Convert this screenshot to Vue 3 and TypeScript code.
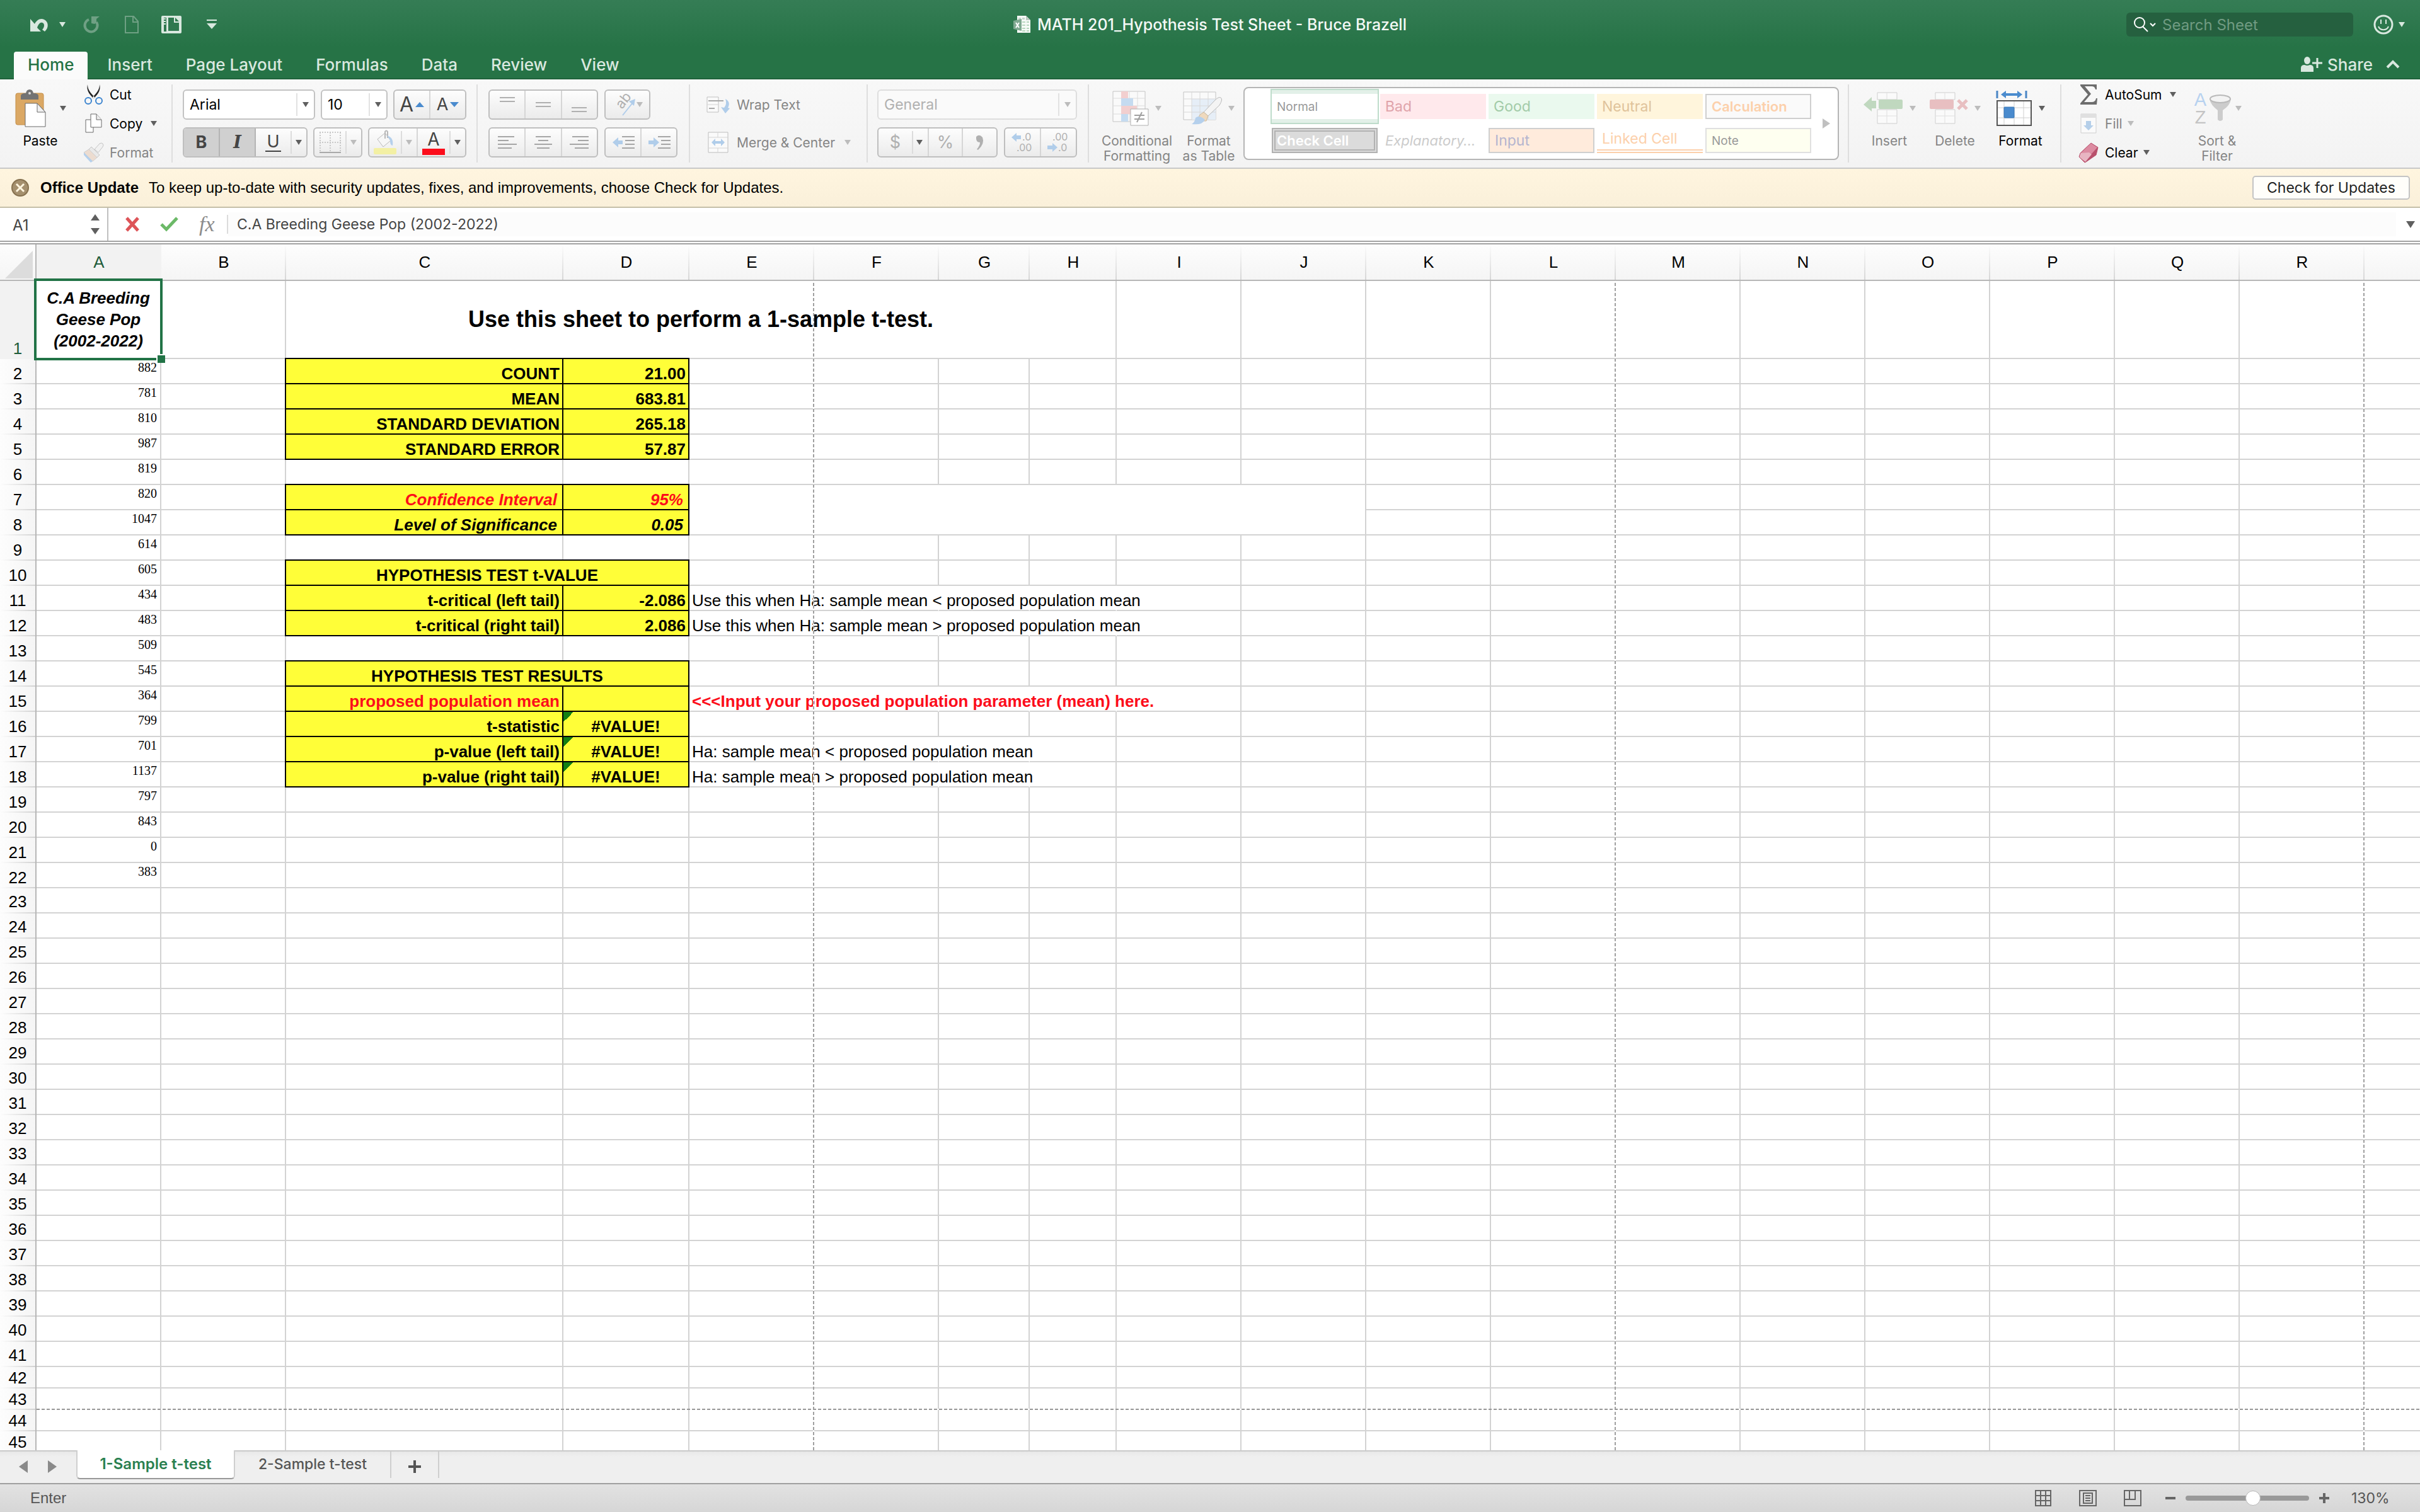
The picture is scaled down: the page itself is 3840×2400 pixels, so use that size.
<script setup lang="ts">
import { ref } from 'vue'

interface Column { letter: string; width?: number; pageBreak?: boolean }
interface Cell { key: string; text: string; classes: string[]; colspan: number; rowspan: number }
interface Row { number: number; classes: string[]; cells: Cell[] }

const menuTabs: string[] = ['Home', 'Insert', 'Page Layout', 'Formulas', 'Data', 'Review', 'View']

const columns: Column[] = [
  { letter: 'A', width: 198 },
  { letter: 'B', width: 198 },
  { letter: 'C', width: 440 },
  { letter: 'D', width: 200 },
  { letter: 'E', width: 198, pageBreak: true },
  { letter: 'F', width: 198 },
  { letter: 'G', width: 144 },
  { letter: 'H', width: 138 },
  { letter: 'I', width: 198 },
  { letter: 'J', width: 198 },
  { letter: 'K', width: 198 },
  { letter: 'L', width: 198, pageBreak: true },
  { letter: 'M', width: 198 },
  { letter: 'N', width: 198 },
  { letter: 'O', width: 198 },
  { letter: 'P', width: 198 },
  { letter: 'Q', width: 198 },
  { letter: 'R', width: 198, pageBreak: true },
  { letter: '' },
]

const geese: number[] = [882, 781, 810, 987, 819, 820, 1047, 614, 605, 434, 483, 509, 545, 364, 799, 701, 1137, 797, 843, 0, 383]

// [text, classes, colspan, rowspan]
const content: Record<string, [string, string, number?, number?]> = {
  A1: ['C.A Breeding Geese Pop (2002-2022)', 'active'],
  C1: ['Use this sheet to perform a 1-sample t-test.', 'heading', 6],
  C2: ['COUNT', 'box'], D2: ['21.00', 'box'],
  C3: ['MEAN', 'box'], D3: ['683.81', 'box'],
  C4: ['STANDARD DEVIATION', 'box'], D4: ['265.18', 'box'],
  C5: ['STANDARD ERROR', 'box'], D5: ['57.87', 'box'],
  C7: ['Confidence Interval', 'box slanted red'], D7: ['95%', 'box slanted red'],
  C8: ['Level of Significance', 'box slanted'], D8: ['0.05', 'box slanted'],
  E7: ['', '', 6, 2],
  C10: ['HYPOTHESIS TEST t-VALUE', 'box middle', 2],
  C11: ['t-critical (left tail)', 'box'], D11: ['-2.086', 'box'],
  C12: ['t-critical (right tail)', 'box'], D12: ['2.086', 'box'],
  C14: ['HYPOTHESIS TEST RESULTS', 'box middle', 2],
  C15: ['proposed population mean', 'box red'], D15: ['', 'box'],
  C16: ['t-statistic', 'box'], D16: ['#VALUE!', 'box middle flagged'],
  C17: ['p-value (left tail)', 'box'], D17: ['#VALUE!', 'box middle flagged'],
  C18: ['p-value (right tail)', 'box'], D18: ['#VALUE!', 'box middle flagged'],
  E11: ['Use this when Ha: sample mean < proposed population mean', ''],
  E12: ['Use this when Ha: sample mean > proposed population mean', ''],
  E15: ['<<<Input your proposed population parameter (mean) here.', 'bold red'],
  E17: ['Ha: sample mean < proposed population mean', ''],
  E18: ['Ha: sample mean > proposed population mean', ''],
}

// Text that runs past its own cell hides the grid lines that it crosses.
const spills: Record<number, string> = { 11: 'EFGH', 12: 'EFGH', 15: 'EFGH', 17: 'EFG', 18: 'EFG' }

function rowClasses(number: number): string[] {
  if (number === 1) return ['tall']
  if (number === 43) return ['short', 'page-break']
  if (number > 41) return ['short']
  return number > 22 ? ['raised'] : []
}

function buildRow(number: number): Row {
  const cells: Cell[] = []
  let skip = 0
  for (const column of columns) {
    if (skip > 0) { skip--; continue }
    if (number === 8 && column.letter && 'EFGHIJ'.includes(column.letter)) continue
    const key = `${column.letter}${number}`
    const entry = content[key]
    const classes = entry ? entry[1].split(' ').filter(Boolean) : []
    let text = entry ? entry[0] : ''
    if (column.letter === 'A' && number > 1 && number <= geese.length + 1) {
      text = String(geese[number - 2])
      classes.push('count')
    }
    if (column.letter && spills[number]?.includes(column.letter)) classes.push('open')
    const colspan = entry?.[2] ?? 1
    cells.push({ key, text, classes, colspan, rowspan: entry?.[3] ?? 1 })
    skip = colspan - 1
  }
  return { number, classes: rowClasses(number), cells }
}

const rows: Row[] = Array.from({ length: 45 }, (_, i) => buildRow(i + 1))

const styleNames: { name: string; kind: string }[] = [
  { name: 'Normal', kind: 'normal' },
  { name: 'Bad', kind: 'bad' },
  { name: 'Good', kind: 'good' },
  { name: 'Neutral', kind: 'neutral' },
  { name: 'Calculation', kind: 'calculation' },
  { name: 'Check Cell', kind: 'checked' },
  { name: 'Explanatory...', kind: 'explanatory' },
  { name: 'Input', kind: 'input' },
  { name: 'Linked Cell', kind: 'linked' },
  { name: 'Note', kind: 'note' },
]

const fontName = ref('Arial')
const fontSize = ref('10')
const numberFormat = ref('General')
const cellName = ref('A1')
const formula = ref('C.A Breeding Geese Pop (2002-2022)')
const search = ref('')
const zoom = ref(55)
</script>

<template>
  <div class="window">
    <header class="top">
      <div class="titlebar">
        <div class="quick">
          <button class="plain undo" aria-label="Undo">
            <svg width="32" height="24" viewBox="0 0 32 24"><path d="M2 3v20h17l-6-6c2-6 5-9 8-8 4 1 4 7 0 11l4 3c7-6 6-16-1-19-6-3-12 1-15 7z" fill="#d9e8df" /></svg>
          </button>
          <button class="plain" aria-label="Undo history"><span class="tri pale"></span></button>
          <button class="plain redo" aria-label="Redo">
            <svg width="26" height="28" viewBox="0 0 26 28"><path d="M8 6a10 10 0 1 0 12 4" fill="none" stroke="#6fa084" stroke-width="4" /><path d="M12 1h13l-5 4v6l-3 2-5-1z" fill="#6fa084" /></svg>
          </button>
          <button class="plain blank" aria-label="New document">
            <svg width="24" height="30" viewBox="0 0 24 30"><path d="M2 2h13l7 8v18H2z M14 2v9h8" fill="none" stroke="#6fa084" stroke-width="2" /></svg>
          </button>
          <button class="plain layout" aria-label="Layout">
            <svg width="34" height="30" viewBox="0 0 34 30"><rect x="1" y="1" width="32" height="28" rx="2" fill="#d9e8df" /><path d="M12 4h9v8h8v13H12z" fill="#2f784f" /><path d="M23 4l6 6h-6z" fill="#2f784f" /><path d="M5 4h4v22H5z" fill="#2f784f" /><path d="M5 6h3M5 10h3M5 14h3" stroke="#d9e8df" stroke-width="2" /></svg>
          </button>
          <button class="plain" aria-label="Customize toolbar">
            <svg width="18" height="18" viewBox="0 0 18 18"><path d="M1 2h16" stroke="#d9e8df" stroke-width="2" /><path d="M1 7h16l-8 9z" fill="#d9e8df" /></svg>
          </button>
        </div>
        <h1 class="title">
          <svg width="28" height="30" viewBox="0 0 28 30"><path d="M6 1h14l7 7v20H6z" fill="#f6faf7" /><path d="M20 1v7h7z" fill="#bcc9c1" /><path d="M8 4h4v3H8zM14 4h4v3h-4z" fill="#c9d6ce" /><path d="M14 10h5v2h-5zM21 10h4v2h-4zM14 15h5v2h-5zM21 15h4v2h-4zM14 20h5v2h-5zM21 20h4v2h-4zM14 24h5v2h-5zM21 24h4v2h-4z" fill="#b9d8c0" /><path d="M0 9l13-3v19L0 22z" fill="#7fa890" /><path d="M4 12l5 8M9 12l-5 8" stroke="#fff" stroke-width="2" /></svg>
          <span>MATH 201_Hypothesis Test Sheet - Bruce Brazell</span>
        </h1>
        <div class="corner">
          <label class="search">
            <svg width="38" height="26" viewBox="0 0 38 26"><circle cx="10" cy="10" r="8" fill="none" stroke="#fff" stroke-width="2" /><path d="M15 16l8 8" stroke="#fff" stroke-width="2" /><path d="M27 11l4 4 4-4" fill="none" stroke="#fff" stroke-width="2" /></svg>
            <input v-model="search" type="text" placeholder="Search Sheet" aria-label="Search Sheet">
          </label>
          <button class="plain smile" aria-label="Feedback">
            <svg width="34" height="34" viewBox="0 0 34 34"><circle cx="17" cy="17" r="14" fill="none" stroke="#d9e8df" stroke-width="3" /><path d="M13 9v7M21 9v7" stroke="#d9e8df" stroke-width="2" /><path d="M9 20c3 7 13 7 16 0" fill="none" stroke="#d9e8df" stroke-width="2" /></svg>
            <span class="tri pale"></span>
          </button>
        </div>
      </div>
      <nav class="tabs">
        <button v-for="(tab, i) in menuTabs" :key="tab" class="tab" :class="{ current: i === 0 }">{{ tab }}</button>
        <button class="plain share">
          <svg width="36" height="26" viewBox="0 0 36 26"><ellipse cx="11" cy="7" rx="5" ry="6" fill="#d9e8df" /><path d="M1 25v-6q0-5 6-5 4 2 8 0 6 0 6 5v6z" fill="#d9e8df" /><path d="M19 11h16M27 3v16" stroke="#d9e8df" stroke-width="3" /></svg>
          Share
        </button>
        <button class="plain collapse" aria-label="Collapse ribbon">
          <svg width="22" height="14" viewBox="0 0 22 14"><path d="M2 12l9-9 9 9" fill="none" stroke="#d9e8df" stroke-width="4" /></svg>
        </button>
      </nav>
    </header>

    <section class="ribbon" aria-label="Home">
      <div class="group clipboard">
        <button class="big paste">
          <span class="art">
            <svg width="54" height="62" viewBox="0 0 54 62"><rect x="2" y="7" width="44" height="50" rx="3" fill="#dba864" stroke="#c48f4b" /><path d="M10 17v-6q0-3 5-4h3q1-6 6-6t6 6h3q5 1 5 4v6z" fill="#737373" /><circle cx="24" cy="7" r="2" fill="#ddd" /><path d="M17 23h19l13 14v23H17z" fill="#fff" stroke="#6b6b6b" /><path d="M36 23v14h13z" fill="#f0f0f0" stroke="#6b6b6b" /></svg>
            <span class="tri"></span>
          </span>
          <span class="caption">Paste</span>
        </button>
        <div class="stack">
          <button class="small far">
            <svg width="32" height="34" viewBox="0 0 32 34"><path d="M7 1c0 8 4 13 12 21l-3 1C8 15 5 9 7 1zM26 1c0 8-4 13-12 21l3 1C25 15 28 9 26 1z" fill="#222" /><circle cx="8" cy="27" r="5" fill="none" stroke="#3d85cf" stroke-width="2" /><circle cx="25" cy="27" r="5" fill="none" stroke="#3d85cf" stroke-width="2" /></svg>
            Cut
          </button>
          <button class="small far">
            <svg width="32" height="34" viewBox="0 0 32 34"><path d="M4 11h12v20H4z" fill="#fff" stroke="#6b6b6b" /><path d="M12 2h9l8 9v12H12z" fill="#fff" stroke="#6b6b6b" /><path d="M21 2v9h8" fill="#eee" stroke="#6b6b6b" /></svg>
            Copy <span class="tri"></span>
          </button>
          <button class="small far" disabled>
            <svg width="32" height="34" viewBox="0 0 32 34"><path d="M18 12l8-9q3-2 5 0 2 2 0 5l-7 9z" fill="#f1f1f1" stroke="#c4c4c4" /><path d="M13 8l13 13-4 4L9 12z" fill="#e9e9e9" stroke="#c4c4c4" /><path d="M9 12l13 13-7 6L1 17z" fill="#ecdcd0" stroke="#cfcfcf" /><path d="M1 17l14 14-3 2L1 21z" fill="#b5d0ec" /></svg>
            Format
          </button>
        </div>
      </div>
      <span class="sep"></span>

      <div class="group rows font">
        <div class="line">
          <span class="combo family">
            <select v-model="fontName" aria-label="Font"><option>Arial</option></select>
            <span class="tri"></span>
          </span>
          <span class="combo size">
            <select v-model="fontSize" aria-label="Font size"><option>10</option></select>
            <span class="tri"></span>
          </span>
          <div class="cluster step">
            <button aria-label="Increase font size"><span class="glyph large">A</span><span class="tri up blue"></span></button>
            <button aria-label="Decrease font size"><span class="glyph">A</span><span class="tri blue"></span></button>
          </div>
        </div>
        <div class="line">
          <div class="cluster biu">
            <button class="pressed"><b class="glyph">B</b></button>
            <button class="pressed"><i class="glyph serif">I</i></button>
            <button class="split"><span class="glyph underlined">U</span></button>
            <button class="drop" aria-label="Underline styles"><span class="tri"></span></button>
          </div>
          <div class="cluster borders">
            <button class="split" aria-label="Borders" disabled>
              <svg width="36" height="36" viewBox="0 0 36 36"><path d="M1 2h34M1 18h34M2 2v30M18 2v30M34 2v30" fill="none" stroke="#c9c9c9" stroke-width="2" stroke-dasharray="2 2" /><path d="M1 34h34" stroke="#a9a9a9" stroke-width="2" /></svg>
            </button>
            <button class="drop" aria-label="Border styles" disabled><span class="tri"></span></button>
          </div>
          <div class="cluster paint">
            <button class="split" aria-label="Fill color" disabled>
              <svg width="38" height="40" viewBox="0 0 38 40"><path d="M7 15l12-10 9 12-12 10z" fill="#f7f7f7" stroke="#b9b9b9" /><path d="M19 14V3q2-3 4 0v10" fill="none" stroke="#b9b9b9" stroke-width="2" /><path d="M22 9q11 3 9 16-4 0-4-8z" fill="#b5d0ec" /><rect x="1" y="29" width="36" height="10" rx="2" fill="#f3f0a4" /></svg>
            </button>
            <button class="drop" aria-label="Fill colors" disabled><span class="tri"></span></button>
            <button class="split ruled" aria-label="Font color"><span class="inked">A</span></button>
            <button class="drop" aria-label="Font colors"><span class="tri"></span></button>
          </div>
        </div>
      </div>
      <span class="sep"></span>

      <div class="group rows align">
        <div class="line">
          <div class="cluster three">
            <button aria-label="Align top" disabled><svg width="34" height="30" viewBox="0 0 34 30"><path d="M5 4h24M5 10h24" stroke="#b0b0b0" stroke-width="2" /></svg></button>
            <button aria-label="Align middle" disabled><svg width="34" height="30" viewBox="0 0 34 30"><path d="M5 12h24M5 18h24" stroke="#b0b0b0" stroke-width="2" /></svg></button>
            <button aria-label="Align bottom" disabled><svg width="34" height="30" viewBox="0 0 34 30"><path d="M5 20h24M5 26h24" stroke="#b0b0b0" stroke-width="2" /></svg></button>
          </div>
          <div class="cluster orient">
            <button aria-label="Orientation" disabled>
              <svg width="38" height="38" viewBox="0 0 38 38"><text x="0" y="0" transform="translate(15 27) rotate(-52)" font-size="22">ab</text><path d="M16 36l16-20" stroke="#b0cdea" stroke-width="2" /><path d="M36 10l-10 4 8 7z" fill="#b0cdea" /></svg>
              <span class="tri"></span>
            </button>
          </div>
        </div>
        <div class="line">
          <div class="cluster three">
            <button aria-label="Align left" disabled><svg width="34" height="26" viewBox="0 0 34 26"><path d="M2 4h26M2 10h17M2 16h30M2 22h22" stroke="#a6a6a6" stroke-width="2" /></svg></button>
            <button aria-label="Align center" disabled><svg width="34" height="26" viewBox="0 0 34 26"><path d="M5 4h24M9 10h16M3 16h28M7 22h20" stroke="#a6a6a6" stroke-width="2" /></svg></button>
            <button aria-label="Align right" disabled><svg width="34" height="26" viewBox="0 0 34 26"><path d="M6 4h26M15 10h17M2 16h30M10 22h22" stroke="#a6a6a6" stroke-width="2" /></svg></button>
          </div>
          <div class="cluster indent">
            <button aria-label="Decrease indent" disabled><svg width="36" height="26" viewBox="0 0 36 26"><path d="M16 4h20M21 10h15M21 16h15M16 22h20" stroke="#a6a6a6" stroke-width="2" /><path d="M1 13l9-8v5h7v6h-7v5z" fill="#b0cdea" /></svg></button>
            <button aria-label="Increase indent" disabled><svg width="36" height="26" viewBox="0 0 36 26"><path d="M16 4h20M21 10h15M21 16h15M16 22h20" stroke="#a6a6a6" stroke-width="2" /><path d="M18 13L9 5v5H1v6h8v5z" fill="#b0cdea" /></svg></button>
          </div>
        </div>
      </div>
      <span class="sep"></span>

      <div class="group rows wrap">
        <button class="small" disabled>
          <svg width="40" height="32" viewBox="0 0 40 32"><path d="M1 4h18v24H1z" fill="#fafafa" stroke="#c0c0c0" /><path d="M3 10h24" stroke="#a9a9a9" stroke-width="2" /><path d="M1 16h18" stroke="#d4d4d4" /><path d="M4 22h9" stroke="#a9a9a9" stroke-width="2" /><path d="M30 7q9 5 4 14l3 1-7 8-7-10 5 1q5-6 2-14z" fill="#b0cdea" /></svg>
          Wrap Text
        </button>
        <button class="small" disabled>
          <svg width="40" height="34" viewBox="0 0 40 34"><path d="M3 1h31v32H3z" fill="#fafafa" stroke="#bdbdbd" /><path d="M3 9h31M3 26h31M18 1v8M18 26v7" stroke="#d4d4d4" /><path d="M8 17l6-6v4h9v-4l6 6-6 6v-4h-9v4z" fill="#b0cdea" /></svg>
          Merge &amp; Center <span class="tri"></span>
        </button>
      </div>
      <span class="sep"></span>

      <div class="group rows number">
        <span class="combo faded">
          <select v-model="numberFormat" aria-label="Number format" disabled><option>General</option></select>
          <span class="tri"></span>
        </span>
        <div class="line">
          <div class="cluster money">
            <button class="split" disabled><span class="glyph">$</span></button>
            <button class="drop" aria-label="Currencies"><span class="tri"></span></button>
            <button class="ruled" disabled><span class="glyph">%</span></button>
            <button aria-label="Comma style" disabled><svg width="16" height="26" viewBox="0 0 16 26"><path d="M2 4q5-5 10 1 4 10-7 20l-2-1q5-6 5-11-7 0-6-9z" fill="#b0b0b0" /></svg></button>
          </div>
          <div class="cluster decimals">
            <button aria-label="Increase decimal" disabled><svg width="38" height="36" viewBox="0 0 38 36"><path d="M1 10l8-7v4h7v6H9v4z" fill="#b0cdea" /><text x="18" y="15" font-size="16">.0</text><text x="9" y="32" font-size="16">.00</text></svg></button>
            <button aria-label="Decrease decimal" disabled><svg width="38" height="36" viewBox="0 0 38 36"><text x="9" y="15" font-size="16">.00</text><path d="M17 26l-8-7v4H1v6h8v4z" fill="#b0cdea" /><text x="18" y="32" font-size="16">.0</text></svg></button>
          </div>
        </div>
      </div>
      <span class="sep"></span>

      <div class="group styles">
        <button class="big conditional" disabled>
          <span class="art">
            <svg width="58" height="56" viewBox="0 0 58 56"><path d="M1 1h51v48H1z" fill="#fafafa" stroke="#c4c4c4" /><path d="M1 12h51M1 24h51M1 37h51M27 1v48M40 1v48" stroke="#dcdcdc" /><path d="M14 1h11v11H14zM14 24h25v13H14z" fill="#f2cfcf" /><path d="M14 12h19v12H14zM14 37h11v12H14z" fill="#c5dbf0" /><path d="M29 29h28v26H29z" fill="#fff" stroke="#b0b0b0" /><path d="M35 39h16M35 45h16M47 34l-8 16" stroke="#a0a0a0" stroke-width="2" /></svg>
            <span class="tri"></span>
          </span>
          <span class="caption">Conditional Formatting</span>
        </button>
        <button class="big astable" disabled>
          <span class="art">
            <svg width="62" height="56" viewBox="0 0 62 56"><path d="M1 2h51v44H1z" fill="#fafafa" stroke="#c4c4c4" /><path d="M14 13h38v33H14z" fill="#e6eef7" /><path d="M1 13h51M1 24h51M1 34h51M14 2v44M27 2v44M40 2v44" stroke="#d8d8d8" /><path d="M60 11q4 2-2 12L40 40l-7-6 18-19q6-6 9-4z" fill="#f4f4f4" stroke="#b9b9b9" /><path d="M33 34l7 6-3 8H22q2-4 5-10z" fill="#efd9bd" stroke="#cdbb9f" /><path d="M20 43q6-5 15 3-4 9-21 7 5-3 6-10z" fill="#b5d0ec" /></svg>
            <span class="tri"></span>
          </span>
          <span class="caption">Format<br>as Table</span>
        </button>
        <div class="gallery">
          <div class="swatches">
            <button v-for="s in styleNames" :key="s.kind" class="swatch" :class="s.kind" disabled>{{ s.name }}</button>
          </div>
          <button class="plain" aria-label="More styles"><span class="tri right"></span></button>
        </div>
      </div>
      <span class="sep"></span>

      <div class="group cells">
        <button class="big" disabled>
          <span class="art">
            <svg width="64" height="52" viewBox="0 0 64 52"><path d="M23 1h31v11H23zM23 28h31v22H23z" fill="#fafafa" stroke="#cfcfcf" /><path d="M38 1v11M38 28v22M23 38h31" stroke="#e0e0e0" /><rect x="25" y="12" width="38" height="15" rx="2" fill="#c0d8bf" /><path d="M1 20L14 8v6h7v12h-7v5z" fill="#c0d8bf" /></svg>
            <span class="tri"></span>
          </span>
          <span class="caption">Insert</span>
        </button>
        <button class="big" disabled>
          <span class="art">
            <svg width="62" height="52" viewBox="0 0 62 52"><path d="M10 1h31v11H10zM10 28h31v22H10z" fill="#fafafa" stroke="#cfcfcf" /><path d="M25 1v11M25 28v22M10 38h31" stroke="#e0e0e0" /><rect x="1" y="12" width="38" height="15" rx="2" fill="#e8bfc1" /><path d="M46 13l14 14M60 13L46 27" stroke="#e8bfc1" stroke-width="5" /></svg>
            <span class="tri"></span>
          </span>
          <span class="caption">Delete</span>
        </button>
        <button class="big">
          <span class="art">
            <svg width="58" height="58" viewBox="0 0 58 58"><path d="M2 1v12M48 1v12" stroke="#4a86c5" stroke-width="3" /><path d="M8 7l8-6v4h18V1l8 6-8 6V9H16v4z" fill="#4a8bce" /><path d="M2 17h54v39H2z" fill="#fff" stroke="#555" stroke-width="2" /><path d="M3 28h52M3 44h52M13 18v37M29 18v37M44 18v37" stroke="#cfcfcf" /><rect x="13" y="27" width="16" height="17" rx="1" fill="#4a8bce" stroke="#3474b5" /></svg>
            <span class="tri"></span>
          </span>
          <span class="caption">Format</span>
        </button>
      </div>
      <span class="sep"></span>

      <div class="group editing">
        <div class="stack">
          <button class="small far">
            <svg width="32" height="34" viewBox="0 0 32 34"><path d="M3 1h26v8h-2q-1-5-6-5H10l10 12-11 13h12q6 0 7-6h2l-1 10H3v-2l12-14L3 3z" fill="#6d6d6d" /></svg>
            AutoSum <span class="tri"></span>
          </button>
          <button class="small" disabled>
            <svg width="32" height="34" viewBox="0 0 32 34"><path d="M4 2h24v30H4z" fill="#fafafa" stroke="#cfcfcf" /><path d="M4 2h24v6H4z" fill="#e0e0e0" /><path d="M16 28l-8-8h4v-7h8v7h4z" fill="#b5cfe9" /></svg>
            Fill <span class="tri"></span>
          </button>
          <button class="small">
            <svg width="32" height="34" viewBox="0 0 32 34"><path d="M20 2l11 7-3 12-16 11-2 1L1 24l2-6z" fill="#b9506c" /><path d="M20 2l10 7-9 10L3 18z" fill="#dc8ba1" /><path d="M3 18l14-1 4 3-10 12L1 24z" fill="#e8b5c2" /><path d="M20 2l11 7-3 12-16 11-2 1L1 24l2-6z" fill="none" stroke="#b9506c" /></svg>
            Clear <span class="tri"></span>
          </button>
        </div>
        <button class="big sort" disabled>
          <span class="art">
            <span class="sort-icon">
              <span class="letters"><span class="az-a">A</span><span class="az-z">Z</span></span>
              <svg width="36" height="46" viewBox="0 0 36 46"><path d="M1 8q2 10 13 18v15q4 4 8 0V26q12-8 13-18z" fill="#cccccc" /><ellipse cx="18" cy="8" rx="16" ry="6" fill="#f3f3f3" stroke="#b9b9b9" stroke-width="2" /></svg>
            </span>
            <span class="tri"></span>
          </span>
          <span class="caption">Sort &amp;<br>Filter</span>
        </button>
      </div>
    </section>

    <section class="notice">
      <button class="plain" aria-label="Close message">
        <svg width="28" height="28" viewBox="0 0 28 28"><circle cx="14" cy="14" r="13" fill="#a5906e" stroke="#86714f" stroke-width="2" /><path d="M8 8l12 12M20 8L8 20" stroke="#fff5df" stroke-width="3" /></svg>
      </button>
      <strong>Office Update</strong>
      <span>To keep up-to-date with security updates, fixes, and improvements, choose Check for Updates.</span>
      <button class="update">Check for Updates</button>
    </section>

    <section class="formula-bar">
      <div class="name-box">
        <input v-model="cellName" type="text" aria-label="Name box">
        <span class="spin"><span class="tri up"></span><span class="tri"></span></span>
      </div>
      <button class="plain" aria-label="Cancel"><svg width="24" height="24" viewBox="0 0 24 24"><path d="M3 2l18 20M21 2L3 22" stroke="#dd5458" stroke-width="5" /></svg></button>
      <button class="plain" aria-label="Confirm"><svg width="30" height="24" viewBox="0 0 30 24"><path d="M2 12l8 8L27 2" fill="none" stroke="#6cb968" stroke-width="5" /></svg></button>
      <button class="plain fx" aria-label="Insert function"><i>fx</i></button>
      <input v-model="formula" class="formula" type="text" aria-label="Formula">
      <button class="plain expand" aria-label="Expand formula bar"><span class="tri big-tri"></span></button>
    </section>

    <main class="sheet">
      <table>
        <colgroup>
          <col class="row-col">
          <col v-for="(c, i) in columns" :key="i" :style="c.width ? { width: c.width + 'px' } : {}">
        </colgroup>
        <thead>
          <tr>
            <th class="all" scope="col" aria-label="Select all"><svg width="46" height="46" viewBox="0 0 46 46"><path d="M45 1v44H1z" fill="#dcdcdc" /></svg></th>
            <th v-for="(c, i) in columns" :key="i" scope="col" :class="{ chosen: i === 0, last: !c.letter, 'page-break': c.pageBreak }">{{ c.letter }}</th>
          </tr>
        </thead>
        <tbody>
          <tr v-for="row in rows" :key="row.number" :class="row.classes">
            <th scope="row" :class="{ chosen: row.number === 1 }">{{ row.number }}</th>
            <td v-for="cell in row.cells" :key="cell.key" :class="cell.classes" :colspan="cell.colspan" :rowspan="cell.rowspan">{{ cell.text }}</td>
          </tr>
        </tbody>
      </table>
    </main>

    <footer>
      <div class="sheet-tabs">
        <button class="plain" aria-label="Previous sheet"><svg width="16" height="20" viewBox="0 0 16 20"><path d="M15 0v20L1 10z" fill="#8a8a8a" /></svg></button>
        <button class="plain" aria-label="Next sheet"><svg width="16" height="20" viewBox="0 0 16 20"><path d="M1 0v20l14-10z" fill="#8a8a8a" /></svg></button>
        <button class="sheet-tab on">1-Sample t-test</button>
        <button class="sheet-tab">2-Sample t-test</button>
        <button class="add" aria-label="Add sheet"><svg width="20" height="20" viewBox="0 0 20 20"><path d="M0 10h20M10 0v20" stroke="#555" stroke-width="4" /></svg></button>
      </div>
      <div class="status">
        <span class="mode">Enter</span>
        <button class="plain" aria-label="Normal view"><svg width="28" height="28" viewBox="0 0 28 28"><path d="M2 2h24v24H2zM2 10h24M2 18h24M10 2v24M18 2v24" fill="none" stroke="#666" stroke-width="2" /></svg></button>
        <button class="plain" aria-label="Page layout view"><svg width="28" height="28" viewBox="0 0 28 28"><path d="M1 2h26v24H1zM7 6h14v16H7zM10 10h8M10 14h8M10 18h8" fill="none" stroke="#666" stroke-width="2" /></svg></button>
        <button class="plain" aria-label="Page break view"><svg width="28" height="28" viewBox="0 0 28 28"><path d="M1 2h26v24H1zM1 16h17V2M9 2v14" fill="none" stroke="#666" stroke-width="2" /></svg></button>
        <button class="plain minus" aria-label="Zoom out"><svg width="16" height="16" viewBox="0 0 16 16"><path d="M0 8h16" stroke="#666" stroke-width="4" /></svg></button>
        <input v-model="zoom" type="range" min="0" max="100" aria-label="Zoom">
        <button class="plain" aria-label="Zoom in"><svg width="16" height="16" viewBox="0 0 16 16"><path d="M0 8h16M8 0v16" stroke="#666" stroke-width="4" /></svg></button>
        <output class="percent">130%</output>
      </div>
    </footer>
  </div>
</template>

<style>
body {
  margin: 0;
}
</style>

<style scoped>
.window {
  display: flex;
  flex-direction: column;
  height: 100vh;
  overflow: hidden;
  background: #fff;
  color: #000;
  font-family: Inter, "Liberation Sans", sans-serif;
  font-size: 21px;
}
.window *, .window *::before, .window *::after { box-sizing: border-box; }
button, input, select { font: inherit; color: inherit; margin: 0; padding: 0; border: 0; background: none; border-radius: 0; }
button { display: flex; align-items: center; white-space: nowrap; }
svg { display: block; flex: none; overflow: visible; }
.plain { flex: none; }

.tri {
  flex: none;
  width: 0;
  height: 0;
  border: 5px solid transparent;
  border-top: 8px solid #5f5f5f;
  border-bottom: 0;
}
.tri.up { border-top: 0; border-bottom: 8px solid #5f5f5f; }
.tri.pale { border-top-color: #d9e8df; }
.tri.blue { border-left-width: 7px; border-right-width: 7px; border-top-color: #4a8bce; }
.tri.up.blue { border-bottom-color: #4a8bce; }
.tri.right { border: 8px solid transparent; border-left: 12px solid #c0c0c0; border-right: 0; }
button:disabled .tri, .faded .tri { border-top-color: #bcbcbc; }

/* Title bar and ribbon tabs */
.top { flex: none; background: linear-gradient(#357d55, #267346 75px); border-bottom: 2px solid #1f633b; }
.titlebar { display: grid; grid-template-columns: 1fr auto 1fr; align-items: center; height: 78px; }
.quick { display: flex; align-items: center; padding-left: 46px; }
.undo { margin-right: 16px; }
.redo { margin-left: 29px; }
.blank { margin-left: 38px; }
.layout { margin: 0 38px 0 34px; }
.title { display: flex; align-items: center; gap: 10px; margin: 0; color: #f3f8f5; font-size: 25px; font-weight: 500; line-height: 32px; }
.corner { display: flex; justify-content: flex-end; align-items: center; gap: 31px; padding-right: 24px; }
.search { display: flex; align-items: center; gap: 8px; width: 360px; height: 38px; padding-left: 11px; border-radius: 6px; background: #25603f; font-size: 24px; }
.search input { flex: 1; min-width: 0; outline: 0; }
.search input::placeholder { color: #709b82; opacity: 1; }
.smile { gap: 7px; }
.tabs { display: flex; align-items: stretch; gap: 9px; height: 48px; padding: 4px 32px 0 22px; margin-bottom: -2px; }
.tab { padding: 0 22px 4px; border-radius: 4px 4px 0 0; color: #d9e8df; font-size: 26px; font-weight: 500; }
.tab.current { background: #fbfbfb; color: #267346; }
.share { gap: 7px; margin-left: auto; padding-bottom: 4px; color: #d9e8df; font-size: 26px; font-weight: 500; }
.collapse { margin-left: 12px; padding-bottom: 4px; }

/* Ribbon */
.ribbon { display: flex; flex: none; height: 142px; border-bottom: 2px solid #c8c8c8; background: linear-gradient(#f8f8f8, #f3f3f3); }
.sep { flex: none; width: 2px; margin: 8px 0; background: #dedede; }
.group { display: flex; flex: none; }
.rows { flex-direction: column; gap: 12px; padding-top: 16px; }
.line { display: flex; gap: 9px; }
.big { flex-direction: column; width: 104px; padding-top: 14px; line-height: 24px; }
.art { display: flex; align-items: center; justify-content: center; gap: 10px; height: 64px; }
.caption { margin-top: 8px; text-align: center; white-space: normal; }
.big:disabled, .small:disabled { color: #858585; }
.stack { display: flex; flex-direction: column; justify-content: center; }
.small { height: 46px; }
.small svg { margin-right: 10px; }
.small .tri { margin-left: 8px; }
.small.far .tri { margin-left: 13px; }

.clipboard { width: 272px; padding-left: 16px; }
.paste { width: 96px; }
.paste .art { gap: 18px; }
.clipboard .stack { margin-left: 20px; }

.combo { display: flex; align-items: center; position: relative; height: 48px; border: 2px solid #c3c3c3; border-radius: 6px; background: #fff; font-size: 23px; }
.combo select { width: 100%; height: 100%; padding-left: 9px; appearance: none; outline: 0; opacity: 1; }
.combo .tri { position: absolute; right: 8px; }
.combo::after { content: ""; position: absolute; right: 26px; top: 4px; bottom: 4px; width: 2px; background: #e2e2e2; }
.combo.faded { border-color: #dedede; background: #fafafa; color: #b0b0b0; }
.family { width: 210px; }
.size { width: 106px; }

.cluster { display: flex; height: 48px; border: 2px solid #bfbfbf; border-radius: 6px; background: linear-gradient(#fdfdfd, #ebebeb); overflow: hidden; }
.cluster button { flex: 1; justify-content: center; color: #444; }
.cluster button + button { border-left: 2px solid #d6d6d6; }
.cluster button.drop { flex: none; width: 25px; border-left: 0; background: linear-gradient(#dcdcdc, #dcdcdc) 0 50% / 2px 36px no-repeat; }
.cluster button:disabled { color: #b0b0b0; }
.cluster button.pressed { background: #d0d0d0; }
.cluster .pressed + button { border-left-color: #b4b4b4; }
.cluster text { fill: #b0b0b0; }
.glyph { font-size: 27px; line-height: 32px; }
.glyph.large { font-size: 32px; }
.glyph.serif { font-family: "DejaVu Serif", serif; font-weight: 700; }
.glyph.underlined { padding: 0 2px; border-bottom: 2px solid #444; line-height: 28px; }
.step { width: 116px; }
.step button { gap: 3px; }
.biu { width: 198px; }
.borders { width: 78px; }
.paint { width: 156px; }
.inked { display: block; width: 36px; border-bottom: 10px solid #fc0d1b; font-size: 28px; line-height: 29px; text-align: center; }

.font { padding-left: 16px; padding-right: 16px; }
.align { width: 335px; padding-left: 17px; }
.align .line { gap: 10px; }
.three { width: 174px; }
.orient { width: 73px; }
.indent { width: 116px; }
.wrap { width: 280px; padding-left: 26px; }
.wrap .small { height: 48px; }
.wrap .small svg { margin-right: 8px; }
.wrap .small .tri { margin-left: 15px; }
.number { padding-left: 15px; padding-right: 17px; }
.number .line { gap: 10px; }
.money { width: 191px; }
.decimals { width: 116px; }

.styles { padding-left: 14px; padding-right: 14px; }
.conditional { width: 124px; }
.conditional .caption { width: 120px; }
.gallery { display: flex; align-items: center; height: 116px; margin: 12px 0 0 3px; padding: 0 12px 0 43px; border: 2px solid #b5b5b5; border-radius: 8px; background: #fff; }
.swatches { display: grid; grid-template-columns: repeat(5, 168px); gap: 14px 4px; margin-right: 18px; }
.swatch { height: 40px; padding-left: 8px; font-size: 23px; }
.swatch.normal { background: #fff; box-shadow: 0 -6px #e2f0e8, 0 6px #e2f0e8, 0 -6px 0 2px #bedccb, 0 6px 0 2px #bedccb; color: #999; font-size: 19px; }
.swatch.bad { background: #ffe9ec; color: #dfa3aa; }
.swatch.good { background: #eaf9ee; color: #a2cba8; }
.swatch.neutral { background: #fff5dc; color: #dfc39b; }
.swatch.calculation { border: 2px solid #cfcfcf; background: #fafafa; color: #fcd0ab; font-size: 22px; font-weight: 600; }
.swatch.checked { padding-left: 2px; border: 6px double #b2b2b2; background: #dbdbdb; color: #fff; font-size: 22px; font-weight: 600; }
.swatch.explanatory { color: #cbcbcb; font-size: 22px; font-style: italic; }
.swatch.input { border: 2px solid #cfcfcf; background: #ffebdc; color: #b5b5cf; }
.swatch.linked { border-bottom: 6px double #fcd0ab; color: #fcd0ab; }
.swatch.note { border: 2px solid #e0e0e0; background: #fefff0; color: #999; font-size: 19px; }

.cells { padding-left: 12px; padding-right: 11px; }
.editing { padding-left: 27px; }
.editing .stack { width: 170px; }
.sort { width: 100px; }
.sort .art { gap: 6px; }
.sort-icon { display: flex; align-items: center; gap: 1px; }
.letters { display: flex; flex-direction: column; width: 24px; font-family: "Liberation Sans", Arial, sans-serif; font-size: 29px; line-height: 28px; text-align: center; }
.az-a { color: #b7d2f0; }
.az-z { color: #c4c4c4; }

/* Update message */
.notice { display: flex; flex: none; align-items: center; height: 62px; padding: 0 16px 0 18px; border-bottom: 2px solid #c5bfa9; background: linear-gradient(#fff5df, #faf0da); font-family: "Liberation Sans", Arial, sans-serif; font-size: 24px; }
.notice strong { margin: 0 16px 0 18px; }
.update { justify-content: center; width: 250px; height: 38px; margin-left: auto; border: 2px solid #c4c4c4; border-radius: 5px; background: #fffefa; color: #222; font-family: Inter, sans-serif; font-size: 23px; }

/* Formula bar */
.formula-bar { display: flex; flex: none; align-items: center; height: 58px; border-bottom: 6px double #a3a3a3; background: #fff; color: #444; font-size: 23px; }
.name-box { display: flex; align-items: center; width: 172px; height: 100%; margin-right: 26px; border-right: 2px solid #bfbfbf; }
.name-box input { flex: 1; min-width: 0; padding: 2px 0 0 20px; font-size: 24px; outline: 0; }
.spin { display: flex; flex-direction: column; gap: 12px; margin-right: 12px; }
.spin .tri { border-left-width: 7px; border-right-width: 7px; border-top-width: 10px; }
.spin .tri.up { border-top-width: 0; border-bottom-width: 10px; }
.formula-bar .plain + .plain { margin-left: 32px; }
.fx { width: 46px; height: 30px; border-right: 2px solid #dcdcdc; color: #8c8c8c; font-family: "Liberation Serif", serif; font-size: 34px; line-height: 30px; }
.formula { flex: 1; min-width: 0; height: 38px; padding-left: 14px; background: #fcfcfc; outline: 0; }
.big-tri { border-width: 11px 7px 0; }
.expand { margin: 0 8px 0 16px; }

/* Grid */
.sheet { flex: 1; min-height: 0; overflow: hidden; font-family: "Liberation Sans", Arial, sans-serif; font-size: 26px; line-height: 30px; }
table { width: 100%; table-layout: fixed; border-collapse: separate; border-spacing: 0; }
.row-col { width: 58px; }
thead th { position: relative; height: 58px; padding: 0; border-bottom: 2px solid #b7b7b7; background: linear-gradient(#fdfdfd, #d6d6d6) 100% 0 / 2px 100% no-repeat, linear-gradient(#fdfdfd, #f5f5f5); font-weight: 400; }
thead th.all { background: linear-gradient(#fdfdfd, #f5f5f5); border-right: 2px solid #b7b7b7; }
thead th.last { background: linear-gradient(#fdfdfd, #f5f5f5); }
.all svg { margin: 8px 0 0 7px; }
thead th.chosen, tbody th.chosen { background: #f2f2f2; color: #1f5c3a; }
tbody tr { height: 40px; }
tbody tr.tall { height: 124px; }
tbody tr.short { height: 34px; }
tbody th { position: relative; padding: 0 0 2px; border-right: 2px solid #b7b7b7; background: linear-gradient(90deg, #fdfdfd, #d2d2d2) 0 100% / 100% 2px no-repeat, linear-gradient(90deg, #fdfdfd, #f5f5f5); font-weight: 400; vertical-align: bottom; }
tr.raised th { padding-bottom: 4px; }
td { padding: 0 4px; border-right: 2px solid #d3d3d3; border-bottom: 2px solid #d3d3d3; vertical-align: bottom; white-space: nowrap; }
td:last-child { border-right: 0; }
td.open { border-right-color: transparent; }
td.count { padding: 2px 5px 0; font-family: "Liberation Serif", serif; font-size: 20px; line-height: 22px; text-align: right; vertical-align: top; }
td.heading { font-size: 36px; line-height: 42px; font-weight: 700; text-align: center; vertical-align: middle; }
td.box { position: relative; border-color: #000; background-color: #fffe38; box-shadow: -2px 0 #000, 0 -2px #000, -2px -2px #000; font-weight: 700; text-align: right; }
td.middle { text-align: center; }
td.slanted { padding-right: 8px; font-style: italic; }
td.bold { font-weight: 700; }
td.red { color: #fc0d1b; }
td.flagged { background-image: linear-gradient(135deg, #138013 50%, transparent 50%); background-size: 16px 16px; background-repeat: no-repeat; }
td.active { position: relative; line-height: 34px; font-style: italic; font-weight: 700; text-align: center; vertical-align: middle; white-space: normal; }
td.active::before { content: ""; position: absolute; z-index: 2; inset: -4px; border: 4px solid #217346; }
td.active::after { content: ""; position: absolute; z-index: 3; right: -8px; bottom: -8px; width: 14px; height: 14px; border: 2px solid #fff; border-right: 0; border-bottom: 0; background: #217346; }
thead th.page-break::after { content: ""; position: absolute; z-index: 1; top: 58px; right: 0; width: 2px; height: 100vh; background: repeating-linear-gradient(#fff 0 3px, #a0a0a0 3px 8px); }
tr.page-break th::after { content: ""; position: absolute; z-index: 1; left: 58px; bottom: 0; width: 100vw; height: 2px; background: repeating-linear-gradient(90deg, #979797 0 5px, #fff 5px 8px); }

/* Sheet tabs and status bar */
footer { flex: none; color: #555; font-size: 23px; }
.sheet-tabs { display: flex; align-items: flex-start; height: 54px; padding-left: 29px; border-top: 2px solid #cacaca; border-bottom: 2px solid #a0a0a0; background: linear-gradient(#e8e8e8, #efefef 8px); }
.sheet-tabs .plain { height: 48px; }
.sheet-tabs .plain + .plain { margin: 0 30px; }
.sheet-tab { justify-content: center; width: 248px; height: 42px; padding-bottom: 2px; border-right: 2px solid #cfcfcf; font-weight: 500; }
.sheet-tab.on { width: 252px; height: 46px; margin-top: -2px; border: 2px solid #cfcfcf; border-top: 0; border-bottom-color: #989898; border-radius: 0 0 6px 6px; background: #fff; color: #2a8050; font-size: 24px; font-weight: 600; }
.add { justify-content: center; width: 76px; height: 42px; padding-top: 6px; border-right: 2px solid #cfcfcf; }
.status { display: flex; align-items: center; height: 44px; padding: 0 48px; background: linear-gradient(#e2e2e2, #d6d6d6); }
.mode { margin-right: auto; font-family: "Liberation Sans", Arial, sans-serif; font-size: 24px; }
.status .plain + .plain { margin-left: 43px; }
.status .plain.minus { margin: 0 16px 0 38px; }
input[type="range"] { width: 196px; height: 24px; margin-right: 16px; appearance: none; }
input[type="range"]::-webkit-slider-runnable-track { height: 8px; border-radius: 4px; background: #999; }
input[type="range"]::-webkit-slider-thumb { width: 24px; height: 24px; margin-top: -8px; border: 1px solid #b5b5b5; border-radius: 50%; background: #fff; appearance: none; }
.percent { width: 61px; margin-left: 35px; }
</style>
